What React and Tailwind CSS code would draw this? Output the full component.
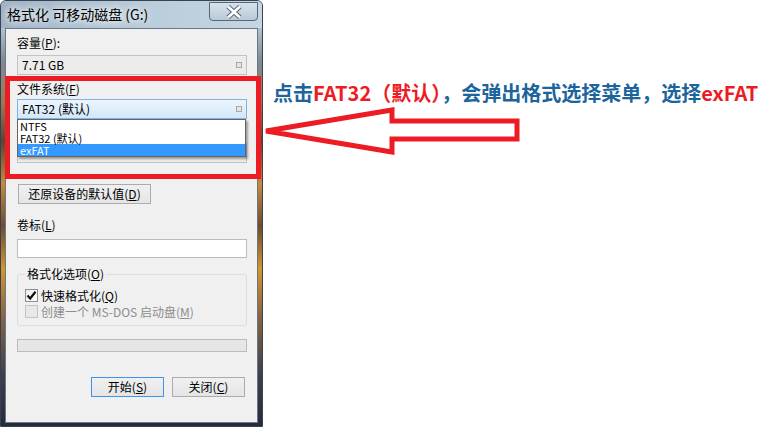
import React from 'react';

const ui = "font-['SimSun','Noto_Sans_CJK_SC',sans-serif] text-[12px] leading-[12px] text-black";

function U({ children }) {
  return <span className="underline underline-offset-1">{children}</span>;
}

function ComboBox({ children, className = '' }) {
  return (
    <div className={`flex items-center justify-between h-[20px] w-[230px] border px-[4px] ${className}`}>
      <span className="whitespace-nowrap">{children}</span>
      <span className="w-[6px] h-[6px] border border-[#a8a8a8] bg-[#e4e4e4]" />
    </div>
  );
}

function CheckBox({ checked, disabled }) {
  return (
    <span
      className={`flex items-center justify-center w-[13px] h-[13px] border ${
        disabled ? 'border-[#c4c4c4] bg-[#e8e8e8]' : 'border-[#8e8f8f] bg-[linear-gradient(135deg,#ececec,#ffffff)]'
      }`}
    >
      {checked && (
        <svg width="11" height="11" viewBox="0 0 11 11">
          <path d="M1.5 5.5 L4.2 8.5 L9.5 1.8" fill="none" stroke="#111" strokeWidth="2.2" />
        </svg>
      )}
    </span>
  );
}

function Button({ children, primary, className = '' }) {
  return (
    <div
      className={`flex items-center justify-center h-[20px] border ${
        primary ? 'border-[#3d95ea]' : 'border-[#acacac]'
      } bg-[linear-gradient(180deg,#f0f0f0,#e5e5e5)] ${className}`}
    >
      {children}
    </div>
  );
}

function FormatDialog() {
  return (
    <div className="relative w-[263px] h-[427px] shrink-0 rounded-t-[6px] border border-[#39414f] bg-[linear-gradient(180deg,#a9bccd_0%,#b3c5d4_6%,#7f8b95_14%,#9a7a55_24%,#5a4434_33%,#c88a3c_43%,#6d4c30_53%,#d6952e_63%,#8a6540_74%,#3d3f4f_88%,#252b3b_100%)]">
      {/* title bar */}
      <div className="flex items-start justify-between h-[27px] rounded-t-[5px] bg-[linear-gradient(90deg,#9fb3c6,#b9ccda_55%,#c6d6e2)]">
        <span className="pl-[6px] pt-[4px] font-['Noto_Sans_CJK_SC',sans-serif] text-[14px] leading-[18px] text-black [text-shadow:0_0_6px_#ffffff,0_0_10px_#ffffff]">
          格式化 可移动磁盘 (G:)
        </span>
        <div className="mt-[1px] mr-[4px] flex items-center justify-center w-[49px] h-[19px] rounded-b-[4px] border border-[#56677a] bg-[linear-gradient(180deg,#d5e2ec,#b8cad8)]">
          <svg width="16" height="14" viewBox="0 0 16 14">
            <path d="M2 1.5 L14 12.5 M14 1.5 L2 12.5" stroke="#5b6470" strokeWidth="4.6" />
            <path d="M2 1.5 L14 12.5 M14 1.5 L2 12.5" stroke="#ffffff" strokeWidth="2.6" />
          </svg>
        </div>
      </div>

      {/* client area */}
      <div className={`mx-[4px] h-[395px] border border-[#6b7886] bg-[#f0f0f0] pt-[8px] pl-[11px] ${ui}`}>
        <div>
          容量(<U>P</U>):
        </div>
        <ComboBox className="mt-[6px] border-[#c2c2c2] bg-[#ececec]">7.71 GB</ComboBox>

        <div className="mt-[8px]">
          文件系统(<U>F</U>)
        </div>
        <div className="relative mt-[4px]">
          <ComboBox className="border-[#7eb4ea] bg-[linear-gradient(180deg,#ecf5fd,#d3e8fa)]">FAT32 (默认)</ComboBox>
          <div className="absolute left-0 top-[20px] z-10 w-[229px] border border-[#646464] bg-white text-[11px] leading-none shadow-[2px_2px_2px_rgba(0,0,0,0.35)]">
            <div className="flex items-center h-[12px] pl-[2px]">NTFS</div>
            <div className="flex items-center h-[12px] pl-[2px]">FAT32 (默认)</div>
            <div className="flex items-center h-[12px] pl-[2px] bg-[#3399ff] text-white">exFAT</div>
          </div>
        </div>

        {/* allocation unit row, hidden behind the open list */}
        <div className="mt-[8px] h-[12px]" />
        <ComboBox className="mt-[4px] border-[#c2c2c2] bg-[#ececec]" />

        <Button className="mt-[21px] ml-[1px] w-[133px] h-[19px]">
          还原设备的默认值(<U>D</U>)
        </Button>

        <div className="mt-[15px]">
          卷标(<U>L</U>)
        </div>
        <div className="mt-[8px] w-[230px] h-[19px] border border-[#bcbcbc] bg-white" />

        <div className="relative mt-[16px] w-[230px] h-[52px] rounded-[3px] border border-[#d5dfe5] pl-[7px] pt-[14px]">
          <span className="absolute -top-[7px] left-[7px] px-[2px] bg-[#f0f0f0]">
            格式化选项(<U>O</U>)
          </span>
          <div className="flex items-center gap-[3px] h-[13px]">
            <CheckBox checked />
            <span>
              快速格式化(<U>Q</U>)
            </span>
          </div>
          <div className="flex items-center gap-[3px] h-[13px] mt-[3px] text-[#8d8d8d]">
            <CheckBox disabled />
            <span>
              创建一个 MS-DOS 启动盘(<U>M</U>)
            </span>
          </div>
        </div>

        <div className="mt-[13px] w-[230px] h-[13px] border border-[#bcbcbc] bg-[#e6e6e6]" />

        <div className="mt-[25px] flex gap-[8px] pl-[74px]">
          <Button primary className="w-[73px]">
            开始(<U>S</U>)
          </Button>
          <Button className="w-[73px]">
            关闭(<U>C</U>)
          </Button>
        </div>
      </div>

      {/* annotation box */}
      <div className="absolute left-[4px] top-[75px] w-[256px] h-[103px] border-[5px] border-[#ed1c24]" />
    </div>
  );
}

export default function App() {
  return (
    <main className="flex w-[769px] h-[433px] bg-white overflow-hidden">
      <FormatDialog />
      <div className="flex flex-col">
        <p className="ml-[10px] mt-[82px] whitespace-nowrap font-['Noto_Sans_CJK_SC',sans-serif] font-bold text-[20px] leading-[22px] text-[#1c649c]">
          点击<span className="text-[#ed1c24]">FAT32（默认）</span>，会弹出格式选择菜单，选择
          <span className="text-[#ed1c24]">exFAT</span>
        </p>
        <svg width="260" height="50" viewBox="0 0 260 50" className="mt-[3px] overflow-visible">
          <polygon
            points="3,24 129,3 129,14 254,14 254,32 129,32 129,45"
            fill="none"
            stroke="#ed1c24"
            strokeWidth="5"
            strokeLinejoin="miter"
          />
        </svg>
      </div>
    </main>
  );
}
